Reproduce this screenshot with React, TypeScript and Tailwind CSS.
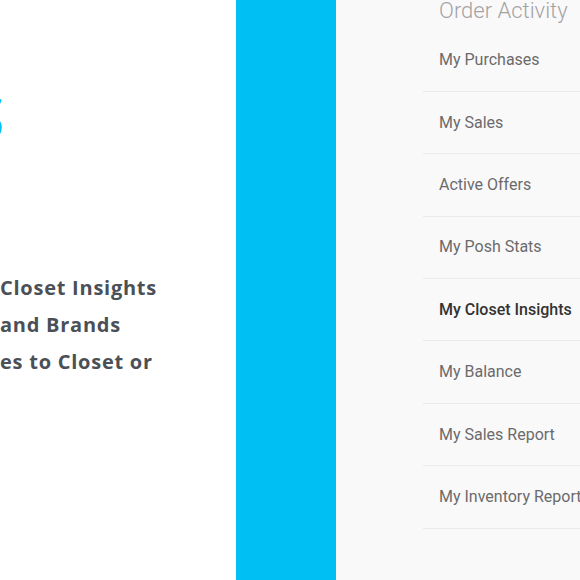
const MENU_ITEMS = [
  { label: "My Purchases" },
  { label: "My Sales" },
  { label: "Active Offers" },
  { label: "My Posh Stats" },
  { label: "My Closet Insights", active: true },
  { label: "My Balance" },
  { label: "My Sales Report" },
  { label: "My Inventory Report" },
];

export default function App() {
  return (
    <div className="flex h-[580px] w-[580px] overflow-hidden bg-white">
      {/* promo copy, cropped at the left edge */}
      <section className="flex w-[236px] shrink-0 flex-col overflow-hidden font-['Open_Sans',sans-serif]">
        <div className="mt-[86px] -ml-[32px] text-[62px] font-extrabold leading-none text-[#00bff3]">S</div>
        <div className="mt-[121px] whitespace-nowrap text-[20px] font-bold leading-[37px] tracking-[0.75px] text-[#4b5057]">
          <p>Closet Insights</p>
          <p>and Brands</p>
          <p>es to Closet or</p>
        </div>
      </section>

      <div className="w-[100px] shrink-0 bg-[#00bff3]" />

      {/* sidebar menu */}
      <aside className="flex-1 overflow-hidden bg-[#faf9fa] font-['Roboto',sans-serif]">
        <div className="-mt-[3px] h-[32.5px] whitespace-nowrap pl-[103px] text-[22px] font-light leading-[28px] text-[#a3a3a3]">
          Order Activity
        </div>
        <ul className="ml-[87px]">
          {MENU_ITEMS.map(({ label, active }) => (
            <li
              key={label}
              className={
                "flex h-[62.4px] items-center whitespace-nowrap border-b border-[#ecebeb] pl-4 text-[16px] " +
                (active ? "font-medium text-[#333333]" : "text-[#6b6b6b]")
              }
            >
              {label}
            </li>
          ))}
        </ul>
      </aside>
    </div>
  );
}
